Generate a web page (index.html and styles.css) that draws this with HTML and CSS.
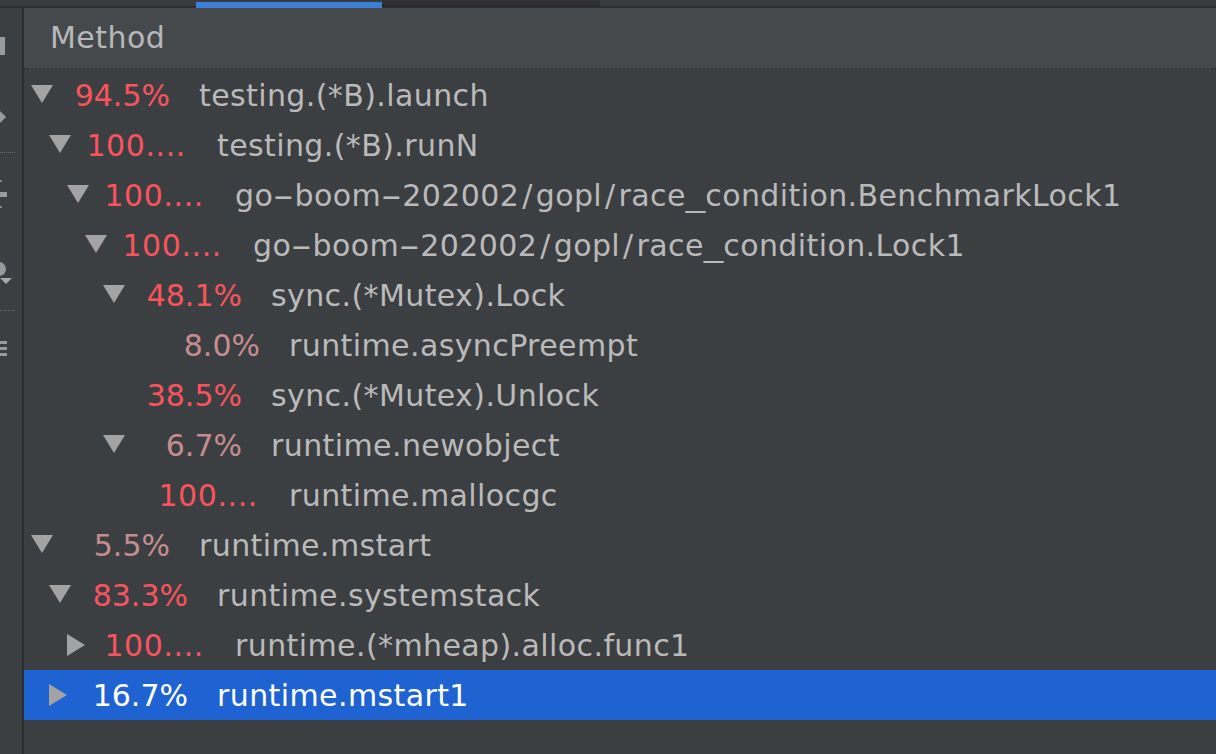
FILE: index.html
```html
<!DOCTYPE html>
<html>
<head>
<meta charset="utf-8">
<link rel="stylesheet" href="styles.css">
</head>
<body>
<div class="topbar">
  <div class="tab-spacer"></div>
  <div class="tab-active"></div>
  <div class="tab-dark"></div>
</div>
<div class="main">
  <div class="strip">
    <div class="ic ic-rect"></div>
    <div class="ic ic-diamond"></div>
    <div class="ic-sep"></div>
    <div class="ic ic-tick"></div>
    <div class="ic ic-bar"></div>
    <div class="ic ic-tick"></div>
    <div class="ic ic-circle"></div>
    <div class="ic ic-down"></div>
    <div class="ic-sep sep2"></div>
    <div class="ic ic-lines"><span></span><span></span><span></span></div>
  </div>
  <div class="divider"></div>
  <div class="panel">
    <div class="header">Method</div>
    <div class="rows">
      <div class="row l0"><span class="arr down"></span><span class="pct hot">94.5%</span><span class="name">testing.(*B).launch</span></div>
      <div class="row l1"><span class="arr down"></span><span class="pct hot dots">100....</span><span class="name">testing.(*B).runN</span></div>
      <div class="row l2"><span class="arr down"></span><span class="pct hot dots">100....</span><span class="name">go<span class="hy">-</span>boom<span class="hy">-</span>202002<span class="sl">/</span>gopl<span class="sl">/</span>race<span class="us">_</span>condition.BenchmarkLock1</span></div>
      <div class="row l3"><span class="arr down"></span><span class="pct hot dots">100....</span><span class="name">go<span class="hy">-</span>boom<span class="hy">-</span>202002<span class="sl">/</span>gopl<span class="sl">/</span>race<span class="us">_</span>condition.Lock1</span></div>
      <div class="row l4"><span class="arr down"></span><span class="pct hot">48.1%</span><span class="name">sync.(*Mutex).Lock</span></div>
      <div class="row l5"><span class="arr"></span><span class="pct cool">8.0%</span><span class="name">runtime.asyncPreempt</span></div>
      <div class="row l4"><span class="arr"></span><span class="pct hot">38.5%</span><span class="name">sync.(*Mutex).Unlock</span></div>
      <div class="row l4"><span class="arr down"></span><span class="pct cool">6.7%</span><span class="name">runtime.newobject</span></div>
      <div class="row l5"><span class="arr"></span><span class="pct hot dots">100....</span><span class="name">runtime.mallocgc</span></div>
      <div class="row l0"><span class="arr down"></span><span class="pct cool">5.5%</span><span class="name">runtime.mstart</span></div>
      <div class="row l1"><span class="arr down"></span><span class="pct hot">83.3%</span><span class="name">runtime.systemstack</span></div>
      <div class="row l2"><span class="arr right"></span><span class="pct hot dots">100....</span><span class="name">runtime.(*mheap).alloc.func1</span></div>
      <div class="row l1 selected"><span class="arr right"></span><span class="pct">16.7%</span><span class="name">runtime.mstart1</span></div>
    </div>
  </div>
</div>
</body>
</html>
```
FILE: styles.css
```css
html, body {
  margin: 0;
  padding: 0;
  height: 100%;
  overflow: hidden;
}
body {
  background: #3c3f41;
  font-family: "DejaVu Sans", "Liberation Sans", sans-serif;
  width: 1216px;
  height: 754px;
}
.topbar {
  height: 6px;
  display: flex;
  background: #393c3f;
  border-bottom: 2px solid #2b2d2f;
}
.tab-spacer { width: 196px; }
.tab-active {
  width: 186px;
  height: 6px;
  margin-top: 2px;
  background: #3b7fd8;
}
.tab-dark {
  width: 218px;
  background: #2f3133;
  border-bottom: 1px dotted #1f2021;
}
.main {
  display: flex;
  height: 746px;
}
.strip {
  width: 22px;
  background: #3c3f41;
  display: flex;
  flex-direction: column;
  align-items: flex-start;
}
.ic { background: #9a9a9a; }
.ic-rect { width: 5px; height: 18px; margin-top: 29px; }
.ic-diamond {
  width: 10px; height: 10px;
  transform: rotate(45deg);
  margin-left: -6px;
  margin-top: 57px;
}
.ic-sep {
  width: 15px;
  height: 0;
  border-top: 1px dotted #6a6d70;
  margin-top: 30px;
}
.ic-tick { width: 2px; height: 2px; margin-top: 27px; background: #888; }
.ic-bar { width: 7px; height: 5px; margin-top: 10px; }
.ic-bar + .ic-tick { margin-top: 9px; }
.ic-circle {
  width: 14px; height: 14px;
  border-radius: 50%;
  margin-left: -8px;
  margin-top: 54px;
}
.ic-down {
  width: 0; height: 0;
  background: none;
  border-left: 6px solid transparent;
  border-right: 6px solid transparent;
  border-top: 6px solid #a8a8a8;
  margin-top: 2px;
}
.sep2 { margin-top: 26px; }
.ic-lines {
  background: none;
  margin-top: 30px;
  display: flex;
  flex-direction: column;
  gap: 3px;
}
.ic-lines span {
  display: block;
  width: 7px;
  height: 3px;
  background: #9a9a9a;
}
.divider {
  width: 2px;
  background: #2b2d2f;
}
.panel {
  flex: 1;
  display: flex;
  flex-direction: column;
}
.header {
  height: 60px;
  background: #45494b;
  border-bottom: 2px dotted #2e3032;
  color: #b6b8ba;
  font-size: 30px;
  letter-spacing: 0.45px;
  line-height: 60px;
  padding-left: 26px;
}
.rows {
  display: flex;
  flex-direction: column;
}
.row {
  height: 50px;
  display: flex;
  align-items: center;
  font-size: 30px;
  letter-spacing: 0.4px;
  color: #bababa;
  white-space: nowrap;
}
.l0 { padding-left: 7px; }
.l1 { padding-left: 25px; }
.l2 { padding-left: 43px; }
.l3 { padding-left: 61px; }
.l4 { padding-left: 79px; }
.l5 { padding-left: 97px; }
.arr {
  width: 22px;
  height: 22px;
  flex: none;
  display: flex;
  align-items: center;
}
.arr.down::before {
  content: "";
  width: 0; height: 0;
  border-left: 11px solid transparent;
  border-right: 11px solid transparent;
  border-top: 18px solid #a3a3a3;
  margin-top: -2px;
}
.arr.right::before {
  content: "";
  width: 0; height: 0;
  border-top: 11px solid transparent;
  border-bottom: 11px solid transparent;
  border-left: 18px solid #a3a3a3;
}
.pct {
  width: 117px;
  flex: none;
  text-align: right;
  letter-spacing: 0;
}
.pct.dots {
  letter-spacing: 0.6px;
  padding-right: 2px;
  box-sizing: border-box;
}
.hot { color: #f9535e; }
.cool { color: #c58d90; }
.name {
  margin-left: 29px;
}
.hy {
  display: inline-block;
  transform: scaleX(2);
  margin: 0 5px;
}
.sl {
  display: inline-block;
  margin: 0 3px;
}
.us {
  display: inline-block;
  transform: scaleX(1.3);
  margin: 0 2px;
}
.selected {
  background: #1f63d3;
  color: #ffffff;
}
```
